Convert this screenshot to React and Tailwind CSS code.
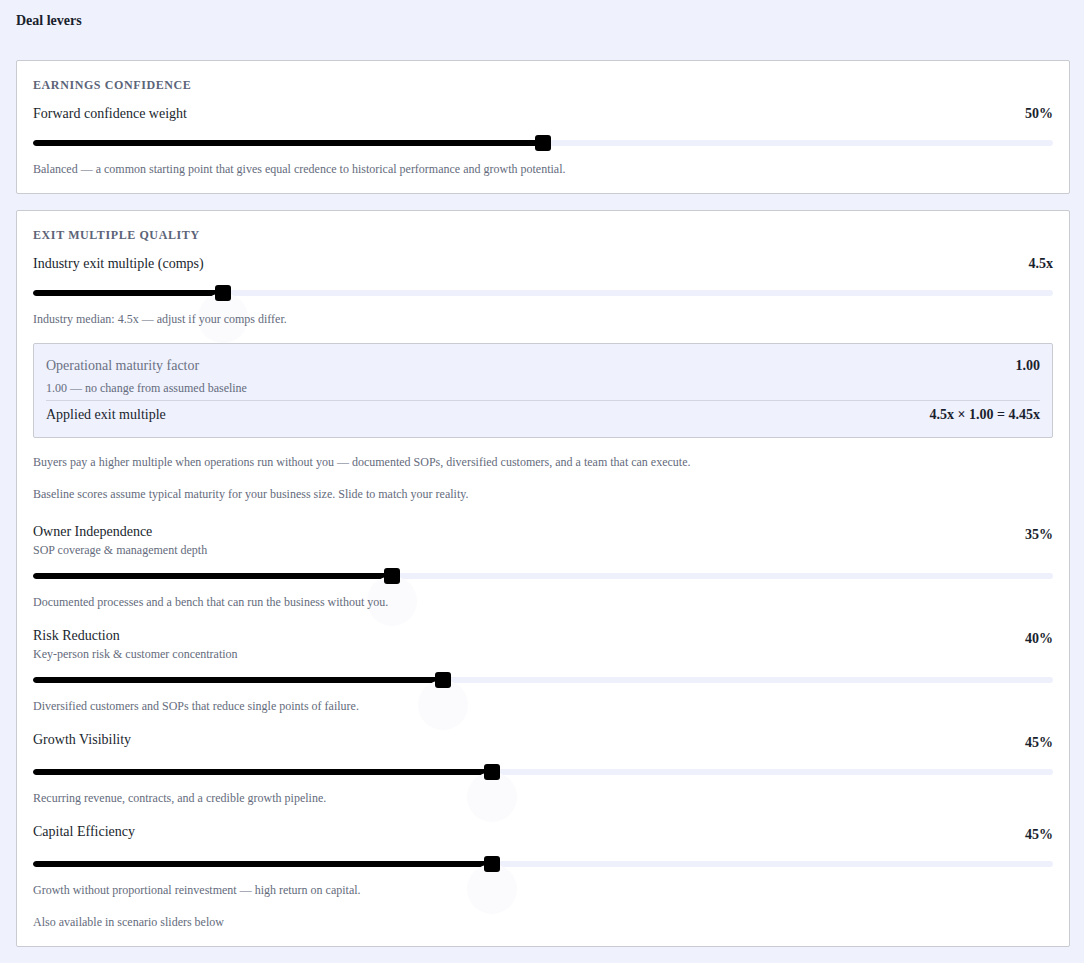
import React from 'react';

const serif = { fontFamily: '"Liberation Serif", "Times New Roman", serif' };

const Slider = ({ pct, halo }) => (
  <div className="relative h-4 flex items-center">
    <div className="w-full h-[6px] rounded-full bg-[#eef1fc] overflow-hidden">
      <div className="h-full bg-black rounded-full" style={{ width: `${pct}%` }} />
    </div>
    {halo && (
      <div
        className="absolute top-2 w-[50px] h-[50px] -ml-[25px] rounded-full bg-[#fbfbfd]"
        style={{ left: `${pct}%` }}
      />
    )}
    <div
      className="absolute top-0 w-4 h-4 -ml-2 rounded-[3px] bg-black"
      style={{ left: `${pct}%` }}
    />
  </div>
);

const Note = ({ children, className = '' }) => (
  <p className={`relative text-xs leading-4 text-[#646b7c] ${className}`}>{children}</p>
);

const SectionTitle = ({ children }) => (
  <h3 className="text-xs leading-4 font-bold uppercase tracking-[0.05em] text-[#5b6478]">{children}</h3>
);

const Lever = ({ label, sub, value, pct, note, className = '' }) => (
  <div className={className}>
    <div className="flex justify-between items-start">
      <div>
        <div className="text-sm leading-5 text-[#1a1f2e]">{label}</div>
        {sub && <div className="text-xs leading-4 text-[#646b7c]">{sub}</div>}
      </div>
      <div className="text-sm leading-5 font-bold text-[#1a1f2e] mt-[3px]">{value}</div>
    </div>
    <div className={sub ? 'mt-[10px]' : 'mt-[11px]'}>
      <Slider pct={pct} halo />
    </div>
    <Note className="mt-[10px]">{note}</Note>
  </div>
);

export default function App() {
  return (
    <div className="min-h-screen bg-[#eff2fd] pl-4 pr-[14px] pt-[11px] pb-4" style={serif}>
      <h2 className="text-sm leading-5 font-bold text-[#1a1f2e]">Deal levers</h2>

      <section className="mt-[29px] bg-white border border-[#c9cbd3] rounded-[2px] p-4">
        <SectionTitle>Earnings confidence</SectionTitle>
        <div className="mt-[11px] flex justify-between items-center">
          <span className="text-sm leading-5 text-[#1a1f2e]">Forward confidence weight</span>
          <span className="text-sm leading-5 font-bold text-[#1a1f2e]">50%</span>
        </div>
        <div className="mt-[11px]">
          <Slider pct={50} />
        </div>
        <Note className="mt-[10px]">
          Balanced — a common starting point that gives equal credence to historical performance and growth potential.
        </Note>
      </section>

      <section className="mt-4 bg-white border border-[#c9cbd3] rounded-[2px] p-4">
        <SectionTitle>Exit multiple quality</SectionTitle>
        <div className="mt-[11px] flex justify-between items-center">
          <span className="text-sm leading-5 text-[#1a1f2e]">Industry exit multiple (comps)</span>
          <span className="text-sm leading-5 font-bold text-[#1a1f2e]">4.5x</span>
        </div>
        <div className="mt-[11px]">
          <Slider pct={18.6} halo />
        </div>
        <Note className="mt-[10px]">Industry median: 4.5x — adjust if your comps differ.</Note>

        <div className="relative mt-4 bg-[#eff1fd] border border-[#c9cbd3] rounded-[2px] px-3 pt-3 pb-3">
          <div className="flex justify-between items-center">
            <span className="text-sm leading-5 text-[#6b7283]">Operational maturity factor</span>
            <span className="text-sm leading-5 font-bold text-[#1a1f2e]">1.00</span>
          </div>
          <div className="mt-1 text-xs leading-4 text-[#646b7c]">1.00 — no change from assumed baseline</div>
          <div className="mt-1 border-t border-[#d3d6e0] pt-1 flex justify-between items-center">
            <span className="text-sm leading-5 text-[#1a1f2e]">Applied exit multiple</span>
            <span className="text-sm leading-5 font-bold text-[#1a1f2e]">4.5x × 1.00 = 4.45x</span>
          </div>
        </div>

        <Note className="mt-4">
          Buyers pay a higher multiple when operations run without you — documented SOPs, diversified customers, and a team that can execute.
        </Note>
        <Note className="mt-4">Baseline scores assume typical maturity for your business size. Slide to match your reality.</Note>

        <Lever
          className="mt-5"
          label="Owner Independence"
          sub="SOP coverage & management depth"
          value="35%"
          pct={35.2}
          note="Documented processes and a bench that can run the business without you."
        />
        <Lever
          className="mt-4"
          label="Risk Reduction"
          sub="Key-person risk & customer concentration"
          value="40%"
          pct={40.2}
          note="Diversified customers and SOPs that reduce single points of failure."
        />
        <Lever
          className="mt-4"
          label="Growth Visibility"
          value="45%"
          pct={45}
          note="Recurring revenue, contracts, and a credible growth pipeline."
        />
        <Lever
          className="mt-4"
          label="Capital Efficiency"
          value="45%"
          pct={45}
          note="Growth without proportional reinvestment — high return on capital."
        />

        <Note className="mt-4">Also available in scenario sliders below</Note>
      </section>
    </div>
  );
}
